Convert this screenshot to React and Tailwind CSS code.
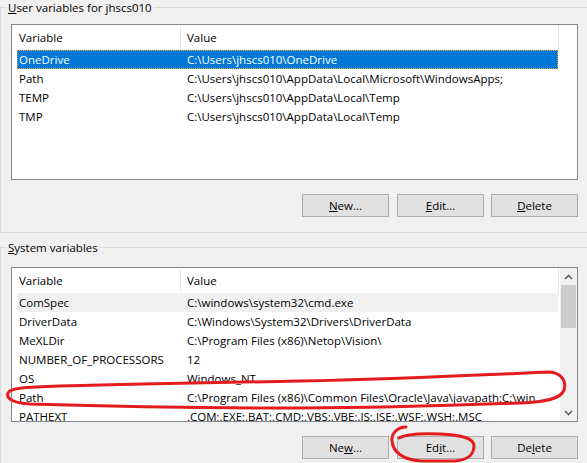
import React from "react";

const userRows = [
  ["OneDrive", "C:\\Users\\jhscs010\\OneDrive"],
  ["Path", "C:\\Users\\jhscs010\\AppData\\Local\\Microsoft\\WindowsApps;"],
  ["TEMP", "C:\\Users\\jhscs010\\AppData\\Local\\Temp"],
  ["TMP", "C:\\Users\\jhscs010\\AppData\\Local\\Temp"],
];

const systemRows = [
  ["ComSpec", "C:\\windows\\system32\\cmd.exe"],
  ["DriverData", "C:\\Windows\\System32\\Drivers\\DriverData"],
  ["MeXLDir", "C:\\Program Files (x86)\\Netop\\Vision\\"],
  ["NUMBER_OF_PROCESSORS", "12"],
  ["OS", "Windows_NT"],
  ["Path", "C:\\Program Files (x86)\\Common Files\\Oracle\\Java\\javapath;C:\\win..."],
  ["PATHEXT", ".COM;.EXE;.BAT;.CMD;.VBS;.VBE;.JS;.JSE;.WSF;.WSH;.MSC"],
];

function Chevron({ up }) {
  return (
    <svg width="9" height="6" viewBox="0 0 9 6">
      <polyline
        points={up ? "1,5 4.5,1.5 8,5" : "1,1 4.5,4.5 8,1"}
        fill="none"
        stroke="#606060"
        strokeWidth="1.6"
      />
    </svg>
  );
}

function ScrollBar() {
  return (
    <div className="w-[17px] h-full flex flex-col bg-[#f0f0f0] shrink-0">
      <div className="h-[17px] flex items-center justify-center shrink-0">
        <Chevron up />
      </div>
      <div className="h-[43px] mx-[1px] bg-[#cdcdcd] shrink-0" />
      <div className="flex-1" />
      <div className="h-[17px] flex items-center justify-center shrink-0">
        <Chevron />
      </div>
    </div>
  );
}

function VarList({ rows, selected, hovered, scroll, height }) {
  return (
    <div
      className={`ml-[10px] w-[567px] border border-[#828790] bg-white flex overflow-hidden ${height}`}
    >
      <div className="w-[548px] flex flex-col shrink-0">
        <div className="flex h-[25px] w-[547px] shrink-0">
          <div className="w-[168px] pl-[7px] flex items-center">Variable</div>
          <div className="w-px bg-[#e5e5e5] my-[2px]" />
          <div className="flex-1 pl-[6px] flex items-center">Value</div>
          <div className="w-px bg-[#e5e5e5]" />
        </div>
        <div className="ml-[5px] w-[541px] flex flex-col">
          {rows.map(([name, value], i) => {
            const isSel = i === selected;
            const isHover = i === hovered;
            return (
              <div
                key={name}
                className={`h-[19px] shrink-0 flex items-center whitespace-nowrap ${
                  isSel
                    ? "bg-[#0078d7] text-white outline-1 outline-dotted outline-[#f5a04a] -outline-offset-1"
                    : isHover
                    ? "bg-[#f0f0f0]"
                    : ""
                }`}
              >
                <div className="w-[168px] pl-[2px] shrink-0">{name}</div>
                <div className="pl-[2px] flex-1 overflow-hidden">{value}</div>
              </div>
            );
          })}
        </div>
      </div>
      {scroll && <ScrollBar />}
    </div>
  );
}

function Btn({ children, className = "" }) {
  return (
    <div
      className={`w-[87px] h-[23px] bg-[#e1e1e1] border border-[#adadad] flex items-center justify-center shrink-0 ${className}`}
    >
      {children}
    </div>
  );
}

function ButtonRow({ mnemonics }) {
  const [n, e, d] = mnemonics;
  return (
    <div className="flex ml-[301px]">
      <Btn>{n}</Btn>
      <Btn className="ml-[8px]">{e}</Btn>
      <Btn className="ml-[7px]">{d}</Btn>
    </div>
  );
}

export default function App() {
  return (
    <div className="relative w-[587px] h-[463px] overflow-hidden bg-[#f0f0f0] text-[11.5px] leading-[15px] text-black font-['Open_Sans','Liberation_Sans',Arial,sans-serif]">
      <fieldset className="w-[600px] border-t border-l border-b border-[#dcdcdc] pb-[15px]">
        <legend className="ml-[5px] px-[2px] leading-[15px]">
          <span className="underline">U</span>ser variables for jhscs010
        </legend>
        <div className="mt-[9px]">
          <VarList rows={userRows} selected={0} hovered={-1} height="h-[156px]" />
        </div>
        <div className="mt-[14px]">
          <ButtonRow
            mnemonics={[
              <><span className="underline">N</span>ew...</>,
              <><span className="underline">E</span>dit...</>,
              <><span className="underline">D</span>elete</>,
            ]}
          />
        </div>
      </fieldset>

      <fieldset className="mt-[7px] w-[600px] border-t border-l border-[#dcdcdc] pb-[40px]">
        <legend className="ml-[5px] px-[2px] leading-[15px]">
          <span className="underline">S</span>ystem variables
        </legend>
        <div className="mt-[12px]">
          <VarList rows={systemRows} selected={-1} hovered={0} scroll height="h-[155px]" />
        </div>
        <div className="mt-[14px]">
          <ButtonRow
            mnemonics={[
              <>Ne<span className="underline">w</span>...</>,
              <>Ed<span className="underline">i</span>t...</>,
              <>De<span className="underline">l</span>ete</>,
            ]}
          />
        </div>
      </fieldset>

      {/* hand-drawn red marks over the Path row and the lower Edit button */}
      <svg
        className="absolute inset-0 pointer-events-none"
        width="587"
        height="463"
        viewBox="0 0 587 463"
      >
        <path
          d="M300 381 C 400 379, 500 374, 548 372 C 560 372, 567 380, 564 390 C 561 399, 545 402, 520 403 C 440 406, 360 408, 300 408 C 220 408, 100 406, 30 404 C 12 403, 6 398, 8 393 C 10 388, 25 387, 60 386 C 140 384, 230 382, 300 381"
          fill="none"
          stroke="#e41b1f"
          strokeWidth="3"
          strokeLinecap="round"
        />
        <path
          d="M406 427 C 398 427, 391 433, 392 441 C 393 452, 403 460, 421 461 L 455 461 C 468 460, 474 454, 474 446 C 474 438, 462 435, 440 434 C 420 433, 406 434, 399 438"
          fill="none"
          stroke="#e41b1f"
          strokeWidth="3"
          strokeLinecap="round"
        />
      </svg>
    </div>
  );
}
